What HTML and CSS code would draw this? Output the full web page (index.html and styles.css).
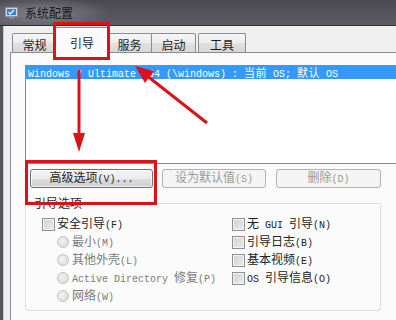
FILE: index.html
```html
<!DOCTYPE html>
<html>
<head>
<meta charset="utf-8">
<link rel="stylesheet" href="styles.css">
</head>
<body>
<div class="win">
  <div class="titlebar">
    <svg class="appicon" width="13" height="12" viewBox="0 0 13 12">
      <rect x="0.5" y="0.5" width="12" height="9" rx="1" fill="#cfd6e0" stroke="#8a96a8"/>
      <rect x="2" y="2" width="9" height="6" fill="#3d7fd6"/>
      <path d="M3.5 5.2 L5.2 6.8 L9 3" fill="none" stroke="#ffffff" stroke-width="1.2"/>
      <rect x="4" y="10" width="5" height="1.5" fill="#8a96a8"/>
    </svg>
    <span class="title">系统配置</span>
  </div>
  <div class="client">
    <div class="tabs">
      <div class="tab">常规</div>
      <div class="tab sel">引导</div>
      <div class="tab">服务</div>
      <div class="tab">启动</div>
      <div class="tab gap">工具</div>
    </div>
    <div class="panel">
      <div class="list">
        <div class="row selrow">Windows 7 Ultimate x64 (\windows) : <span class="zh">当前</span> OS; <span class="zh">默认</span> OS</div>
      </div>
      <div class="btns">
        <div class="btn b1"><span>高级选项<span class="m">(V)...</span></span></div>
        <div class="btn b2 off"><span>设为默认值<span class="m">(S)</span></span></div>
        <div class="btn b3 off"><span>删除<span class="m">(D)</span></span></div>
      </div>
      <fieldset class="group">
        <legend>引导选项</legend>
        <div class="cols">
          <div class="col">
            <div class="opt"><span class="cb"></span><span class="lbl">安全引导<span class="m">(F)</span></span></div>
            <div class="opt sub dis"><span class="rb"></span><span class="lbl">最小<span class="m">(M)</span></span></div>
            <div class="opt sub dis"><span class="rb"></span><span class="lbl">其他外壳<span class="m">(L)</span></span></div>
            <div class="opt sub dis"><span class="rb"></span><span class="lbl"><span class="m">Active Directory </span>修复<span class="m">(P)</span></span></div>
            <div class="opt sub dis"><span class="rb"></span><span class="lbl">网络<span class="m">(W)</span></span></div>
          </div>
          <div class="col">
            <div class="opt"><span class="cb"></span><span class="lbl">无<span class="m"> GUI </span>引导<span class="m">(N)</span></span></div>
            <div class="opt"><span class="cb"></span><span class="lbl">引导日志<span class="m">(B)</span></span></div>
            <div class="opt"><span class="cb"></span><span class="lbl">基本视频<span class="m">(E)</span></span></div>
            <div class="opt"><span class="cb"></span><span class="lbl"><span class="m">OS </span>引导信息<span class="m">(O)</span></span></div>
          </div>
        </div>
      </fieldset>
    </div>
  </div>
  <svg class="annot" width="396" height="320" viewBox="0 0 396 320">
    <rect x="54.5" y="23.5" width="54" height="35" fill="none" stroke="#d8141a" stroke-width="3"/>
    <rect x="26.5" y="161.5" width="129" height="42" fill="none" stroke="#d8141a" stroke-width="3"/>
    <line x1="79" y1="70" x2="79" y2="136" stroke="#d8141a" stroke-width="3"/>
    <polygon points="73,133 85,133 79,152" fill="#d8141a"/>
    <line x1="207" y1="123" x2="146" y2="75" stroke="#d8141a" stroke-width="3"/>
    <polygon points="135,66 154,71 145,83" fill="#d8141a"/>
  </svg>
</div>
</body>
</html>
```

FILE: styles.css
```css
html, body {
  margin: 0;
  padding: 0;
}
body {
  width: 396px;
  height: 320px;
  overflow: hidden;
  font-family: "Noto Sans CJK SC", "Liberation Sans", sans-serif;
  font-size: 12px;
  color: #1e1e1e;
}
.win {
  position: relative;
  width: 396px;
  height: 320px;
  overflow: hidden;
  background: #f0f0f0;
  display: flex;
  flex-direction: column;
}
.titlebar {
  height: 25px;
  flex: none;
  border-bottom: 1px solid #2f2f35;
  background:
    radial-gradient(ellipse 70px 16px at 42px 13px, rgba(170,170,176,0.55), rgba(170,170,176,0) 100%),
    linear-gradient(#4a4952, #5d5c65);
  display: flex;
  align-items: center;
  padding-left: 5px;
}
.appicon {
  flex: none;
  margin-right: 7px;
}
.title {
  font-size: 12px;
  line-height: 14px;
  color: #151515;
}
.client {
  flex: 1;
  border-left: 3px solid #55555c;
  box-shadow: inset 1px 0 0 #c9c9cc;
  display: flex;
  flex-direction: column;
  min-height: 0;
}
.tabs {
  height: 26px;
  flex: none;
  display: flex;
  align-items: flex-end;
  padding-left: 9px;
  position: relative;
  z-index: 2;
}
.tab {
  height: 19px;
  box-sizing: border-box;
  width: 45px;
  border: 1px solid #898c95;
  border-bottom: none;
  border-radius: 2px 2px 0 0;
  background: linear-gradient(#f6f6f6, #ececec 50%, #e0e0e0 51%, #d8d8d8);
  text-align: center;
  line-height: 14px;
  padding-top: 4px;
  margin-right: -1px;
}
.tab.sel {
  height: 26px;
  width: 54px;
  margin-bottom: -1px;
  margin-left: -1px;
  margin-right: -2px;
  padding-top: 8px;
  background: #fbfbfb;
  position: relative;
  z-index: 3;
}
.tab.gap {
  margin-left: 3px;
  width: 48px;
}
.panel {
  flex: 1;
  margin-left: 7px;
  border: 1px solid #898c95;
  border-right: none;
  border-bottom: none;
  background: #fbfbfb;
  min-height: 0;
}
.list {
  margin: 12px 0 0 14px;
  height: 99px;
  box-sizing: border-box;
  border: 1px solid #828790;
  border-right: none;
  background: #ffffff;
}
.row {
  height: 13px;
  line-height: 13px;
  font-family: "Liberation Mono", "Noto Sans CJK SC", monospace;
  font-size: 10px;
  white-space: nowrap;
  padding-left: 2px;
}
.selrow {
  background: #3399ff;
  color: #ffffff;
}
.zh {
  font-family: "Noto Sans CJK SC", sans-serif;
  font-size: 11px;
  letter-spacing: 0.5px;
}
.m {
  font-family: "Liberation Mono", monospace;
  font-size: 10px;
  white-space: pre;
}
.btns {
  display: flex;
  margin: 5px 0 0 19px;
}
.btn {
  height: 19px;
  box-sizing: border-box;
  border: 1px solid #707070;
  border-radius: 3px;
  background: linear-gradient(#f3f3f3, #ebebeb 50%, #dddddd 51%, #cfcfcf);
  box-shadow: inset 0 0 0 1px rgba(255,255,255,0.7);
  display: flex;
  align-items: center;
  justify-content: center;
  line-height: 14px;
  white-space: nowrap;
}
.b1 { width: 123px; margin-right: 9px; }
.b2 { width: 104px; margin-right: 10px; }
.b3 { width: 105px; }
.btn.off {
  border-color: #adb2b5;
  background: #f4f4f4;
  box-shadow: none;
  color: #9a9a9a;
}
.group {
  margin: 8px 0 0 14px;
  width: 356px;
  height: 115px;
  box-sizing: border-box;
  padding: 5px 0 0 0;
  border: 1px solid #d5dfe5;
  border-radius: 3px;
  box-shadow: inset 1px 1px 0 #ffffff;
}
.group legend {
  padding: 0 1px;
  margin-left: 7px;
  line-height: 14px;
  font-size: 12px;
}
.cols {
  display: grid;
  grid-template-columns: 206px 1fr;
}
.col {
  padding-left: 16px;
}
.col + .col {
  padding-left: 0;
}
.opt {
  height: 18px;
  display: flex;
  align-items: center;
  white-space: nowrap;
  line-height: 18px;
  color: #222222;
}
.opt.sub {
  padding-left: 15px;
}
.opt.dis {
  color: #7a7a7a;
}
.cb {
  width: 13px;
  height: 13px;
  box-sizing: border-box;
  border: 1px solid #8e8f8f;
  background: linear-gradient(135deg, #d0d0d0, #ececec);
  box-shadow: inset 0 0 0 1px #f4f4f4;
  margin-right: 2px;
  flex: none;
}
.rb {
  width: 12px;
  height: 12px;
  box-sizing: border-box;
  border-radius: 50%;
  border: 1px solid #c4c4c4;
  background: radial-gradient(circle at 40% 40%, #f2f2f2, #d6d6d6);
  margin-right: 3px;
  flex: none;
}
.annot {
  position: absolute;
  left: 0;
  top: 0;
  z-index: 10;
  pointer-events: none;
}
```
